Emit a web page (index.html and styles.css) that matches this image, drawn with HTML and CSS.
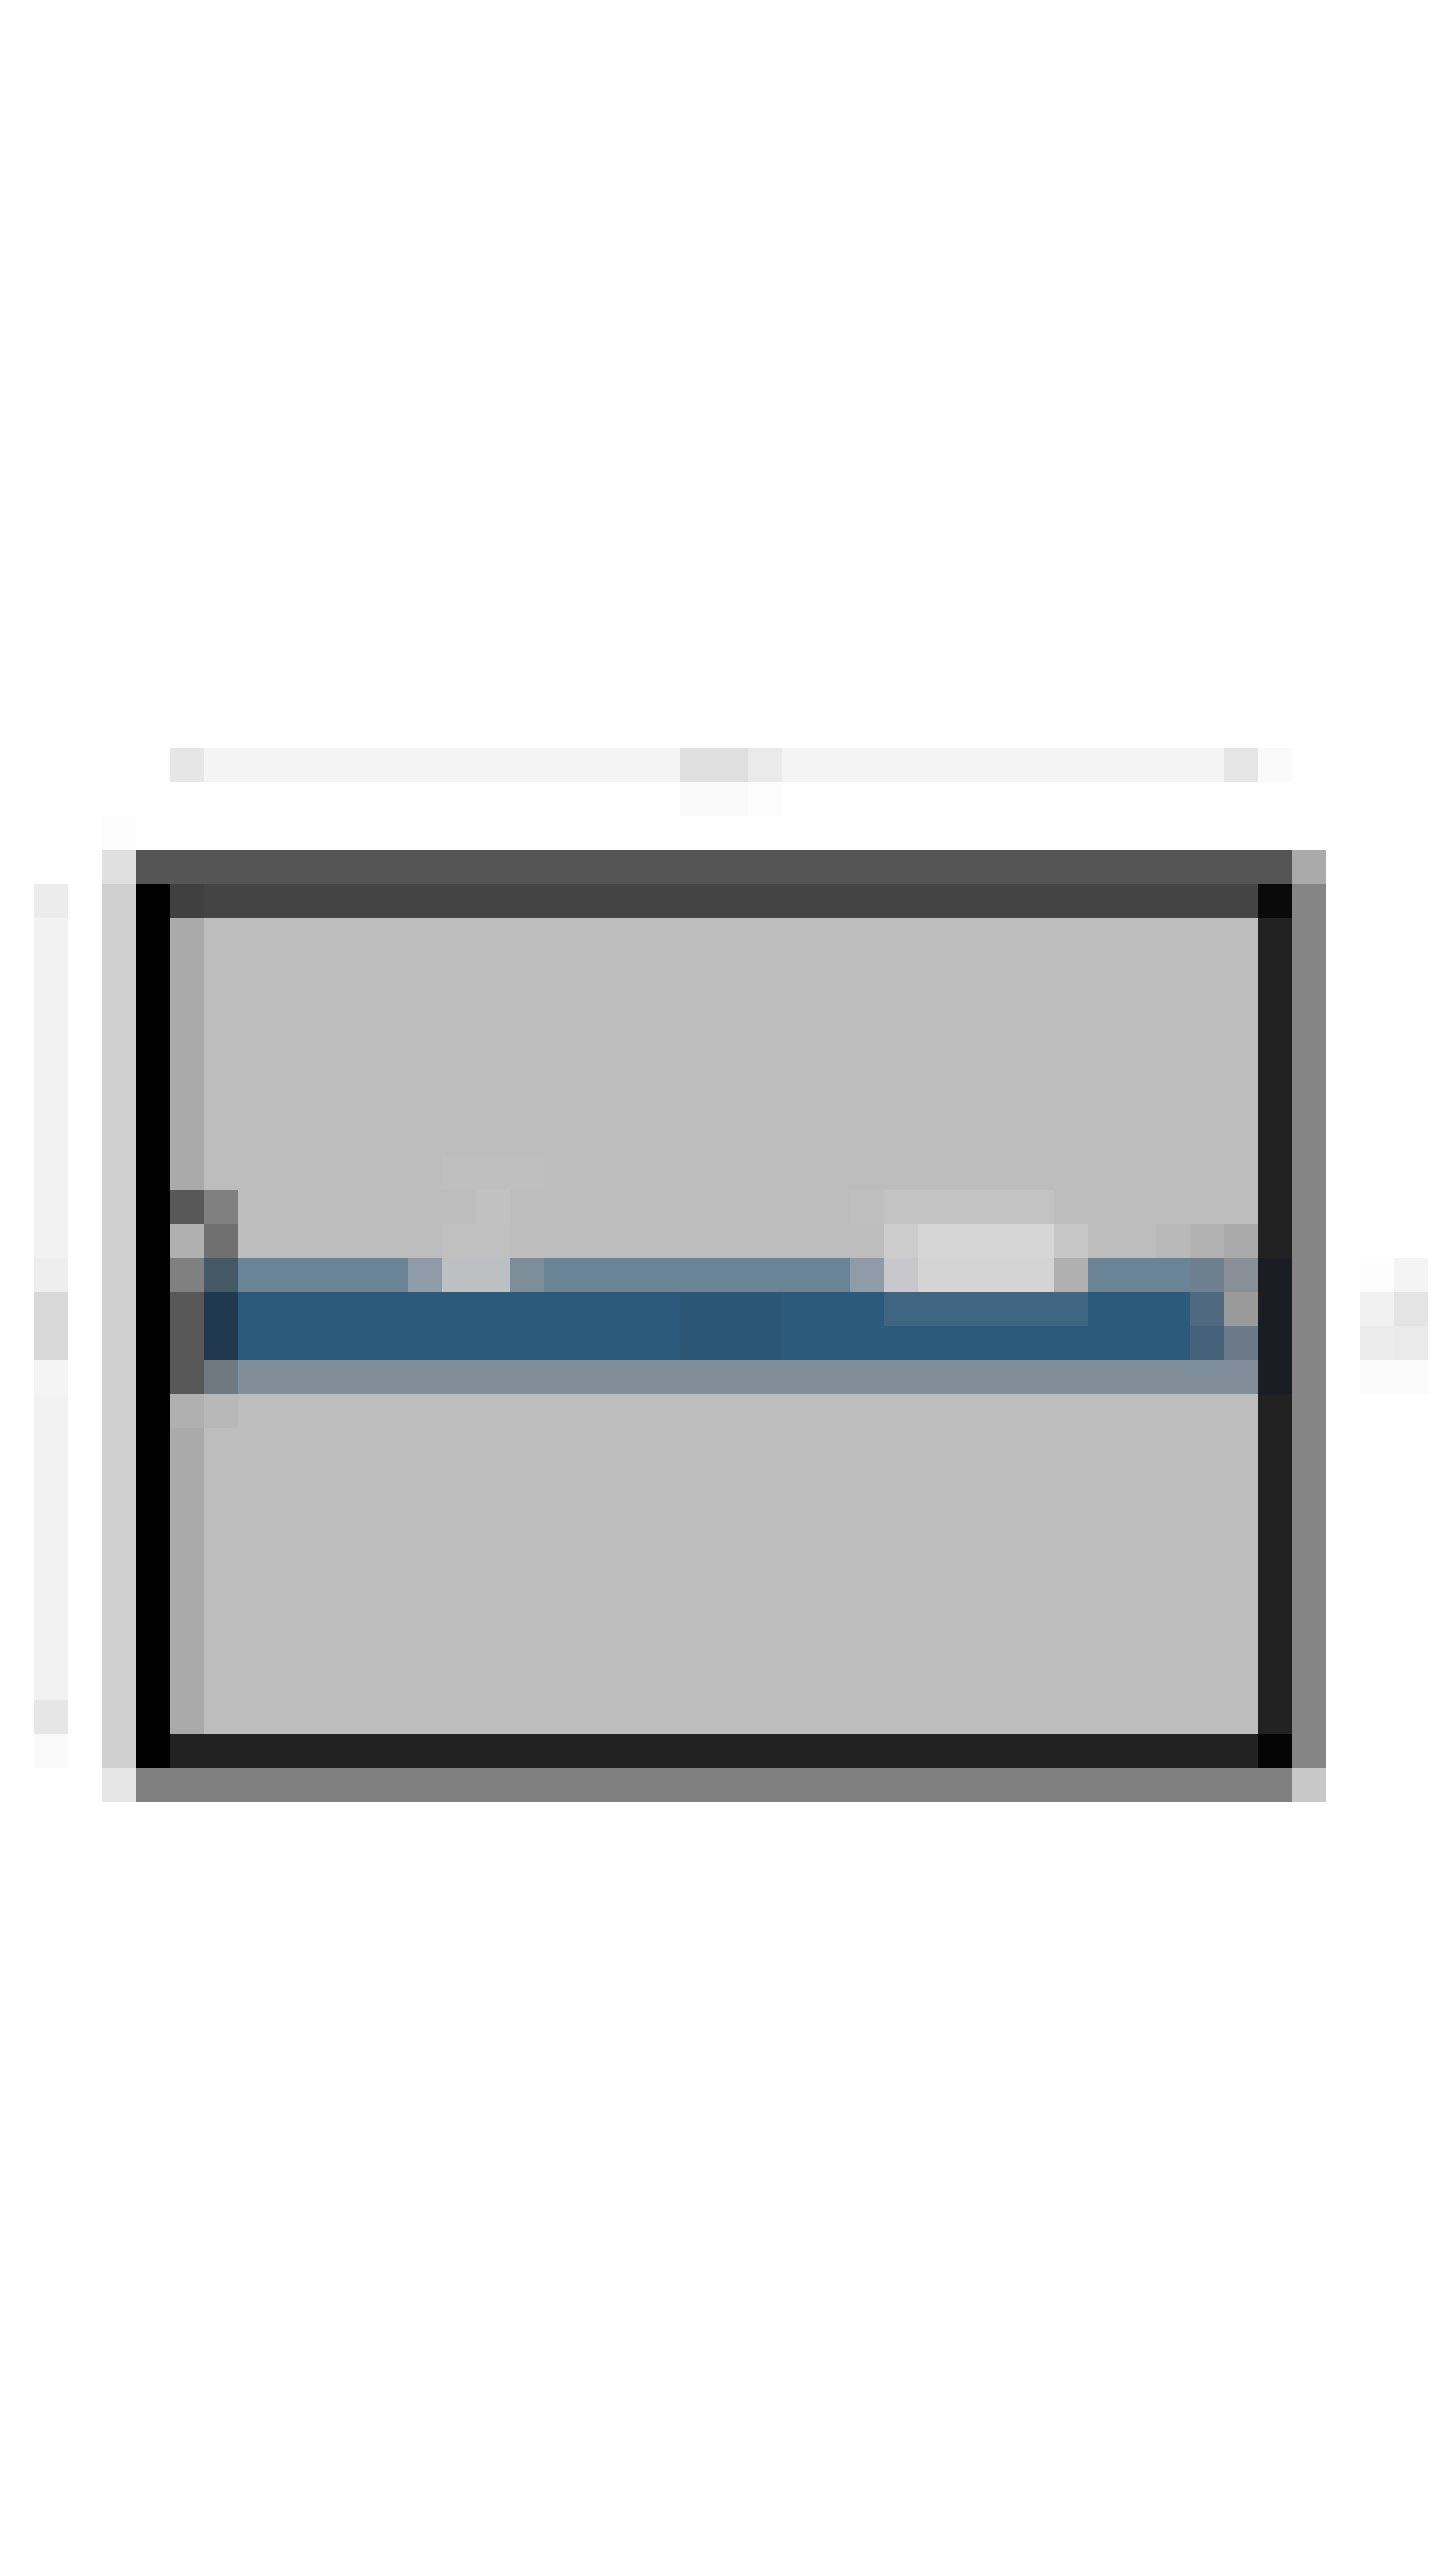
FILE: index.html
```html
<!DOCTYPE html>
<html lang="en">
<head>
<meta charset="utf-8">
<title>Progress window icon</title>
<link rel="stylesheet" href="styles.css">
</head>
<body>
<main class="canvas">
<svg class="icon" viewBox="0 0 43 76" width="1462" height="2584" shape-rendering="crispEdges" aria-label="Progress window icon">
  <rect x="0" y="0" width="43" height="76" fill="#ffffff"/>
  <!-- faint shadow row above -->
  <rect x="5" y="22" width="1" height="1" fill="#e6e6e6"/>
  <rect x="6" y="22" width="14" height="1" fill="#f4f4f4"/>
  <rect x="20" y="22" width="2" height="1" fill="#e0e0e0"/>
  <rect x="22" y="22" width="1" height="1" fill="#eaeaea"/>
  <rect x="23" y="22" width="13" height="1" fill="#f4f4f4"/>
  <rect x="36" y="22" width="1" height="1" fill="#e6e6e6"/>
  <rect x="37" y="22" width="1" height="1" fill="#fafafa"/>
  <rect x="20" y="23" width="2" height="1" fill="#fafafa"/>
  <rect x="22" y="23" width="1" height="1" fill="#fcfcfc"/>
  <rect x="3" y="24" width="1" height="1" fill="#fdfdfd"/>
  <!-- faint left column -->
  <rect x="1" y="26" width="1" height="1" fill="#ececec"/>
  <rect x="1" y="27" width="1" height="10" fill="#f2f2f2"/>
  <rect x="1" y="37" width="1" height="1" fill="#eeeeee"/>
  <rect x="1" y="38" width="1" height="2" fill="#d8d8d8"/>
  <rect x="1" y="40" width="1" height="1" fill="#f4f4f4"/>
  <rect x="1" y="41" width="1" height="9" fill="#f2f2f2"/>
  <rect x="1" y="50" width="1" height="1" fill="#e6e6e6"/>
  <rect x="1" y="51" width="1" height="1" fill="#fafafa"/>
  <!-- faint right blob -->
  <rect x="40" y="37" width="1" height="1" fill="#fdfdfd"/>
  <rect x="41" y="37" width="1" height="1" fill="#f4f4f4"/>
  <rect x="40" y="38" width="1" height="1" fill="#f0f0f0"/>
  <rect x="41" y="38" width="1" height="1" fill="#e4e4e4"/>
  <rect x="40" y="39" width="1" height="1" fill="#ececec"/>
  <rect x="41" y="39" width="1" height="1" fill="#eaeaea"/>
  <rect x="40" y="40" width="2" height="1" fill="#fbfbfb"/>
  <!-- outer frame -->
  <rect x="3" y="25" width="1" height="1" fill="#e0e0e0"/>
  <rect x="3" y="26" width="1" height="26" fill="#d0d0d0"/>
  <rect x="3" y="52" width="1" height="1" fill="#e6e6e6"/>
  <rect x="4" y="25" width="34" height="1" fill="#555555"/>
  <rect x="38" y="25" width="1" height="1" fill="#aaaaaa"/>
  <rect x="38" y="26" width="1" height="26" fill="#858585"/>
  <rect x="4" y="52" width="34" height="1" fill="#808080"/>
  <rect x="38" y="52" width="1" height="1" fill="#c8c8c8"/>
  <!-- window border -->
  <rect x="4" y="26" width="1" height="26" fill="#000000"/>
  <rect x="5" y="26" width="1" height="1" fill="#404040"/>
  <rect x="6" y="26" width="31" height="1" fill="#444444"/>
  <rect x="37" y="26" width="1" height="1" fill="#0a0a0a"/>
  <rect x="37" y="27" width="1" height="24" fill="#222222"/>
  <rect x="5" y="51" width="32" height="1" fill="#222222"/>
  <rect x="37" y="51" width="1" height="1" fill="#050505"/>
  <!-- window body -->
  <rect x="5" y="27" width="1" height="24" fill="#aaaaaa"/>
  <rect x="6" y="27" width="31" height="24" fill="#bdbdbd"/>
  <!-- subtle highlights -->
  <rect x="13" y="34" width="3" height="1" fill="#bfbfbf"/>
  <rect x="14" y="35" width="1" height="1" fill="#c1c1c1"/>
  <rect x="13" y="36" width="2" height="1" fill="#c0c0c0"/>
  <rect x="25" y="35" width="1" height="1" fill="#bfbfbf"/>
  <rect x="26" y="35" width="5" height="1" fill="#c3c3c3"/>
  <rect x="26" y="36" width="1" height="1" fill="#cccccc"/>
  <rect x="27" y="36" width="4" height="1" fill="#d6d6d6"/>
  <rect x="31" y="36" width="1" height="1" fill="#c6c6c6"/>
  <rect x="34" y="36" width="1" height="1" fill="#b9b9b9"/>
  <rect x="35" y="36" width="1" height="1" fill="#b2b2b2"/>
  <rect x="36" y="36" width="1" height="1" fill="#aaaaaa"/>
  <!-- left end cap -->
  <rect x="5" y="35" width="1" height="1" fill="#585858"/>
  <rect x="5" y="36" width="1" height="1" fill="#b0b0b0"/>
  <rect x="5" y="37" width="1" height="1" fill="#808080"/>
  <rect x="5" y="38" width="1" height="3" fill="#585858"/>
  <rect x="5" y="41" width="1" height="1" fill="#b0b0b0"/>
  <rect x="6" y="35" width="1" height="1" fill="#808080"/>
  <rect x="6" y="36" width="1" height="1" fill="#707070"/>
  <rect x="6" y="37" width="1" height="1" fill="#445866"/>
  <rect x="6" y="38" width="1" height="2" fill="#203850"/>
  <rect x="6" y="40" width="1" height="1" fill="#707880"/>
  <rect x="6" y="41" width="1" height="1" fill="#b8b8b8"/>
  <!-- progress bar row 37 -->
  <rect x="7" y="37" width="5" height="1" fill="#6a8496"/>
  <rect x="12" y="37" width="1" height="1" fill="#8d9ca6"/>
  <rect x="13" y="37" width="2" height="1" fill="#bcc0c0"/>
  <rect x="15" y="37" width="1" height="1" fill="#7e8e98"/>
  <rect x="16" y="37" width="9" height="1" fill="#6a8496"/>
  <rect x="25" y="37" width="1" height="1" fill="#8d9ca6"/>
  <rect x="26" y="37" width="1" height="1" fill="#c8c8cc"/>
  <rect x="27" y="37" width="4" height="1" fill="#d4d4d4"/>
  <rect x="31" y="37" width="1" height="1" fill="#b0b0b0"/>
  <rect x="32" y="37" width="3" height="1" fill="#6a8496"/>
  <rect x="35" y="37" width="1" height="1" fill="#6c8090"/>
  <rect x="36" y="37" width="1" height="1" fill="#8a9098"/>
  <!-- progress bar rows 38-39 -->
  <rect x="7" y="38" width="28" height="2" fill="#2c5a7a"/>
  <rect x="20" y="38" width="3" height="2" fill="#2b5674"/>
  <rect x="26" y="38" width="6" height="1" fill="#406582"/>
  <rect x="35" y="38" width="1" height="1" fill="#4f6a80"/>
  <rect x="36" y="38" width="1" height="1" fill="#9a9a9a"/>
  <rect x="35" y="39" width="1" height="1" fill="#46627a"/>
  <rect x="36" y="39" width="1" height="1" fill="#6a7a88"/>
  <!-- progress bar row 40 -->
  <rect x="7" y="40" width="30" height="1" fill="#808e99"/>
  <!-- right border darker beside the bar -->
  <rect x="37" y="37" width="1" height="4" fill="#1a1e22"/>
</svg>
</main>
</body>
</html>
```
FILE: styles.css
```css
html, body {
  margin: 0;
  padding: 0;
  background: #ffffff;
}

.canvas {
  width: 1440px;
  height: 2560px;
  overflow: hidden;
  font-family: "Liberation Sans", Arial, sans-serif;
}

.icon {
  display: block;
}
```
